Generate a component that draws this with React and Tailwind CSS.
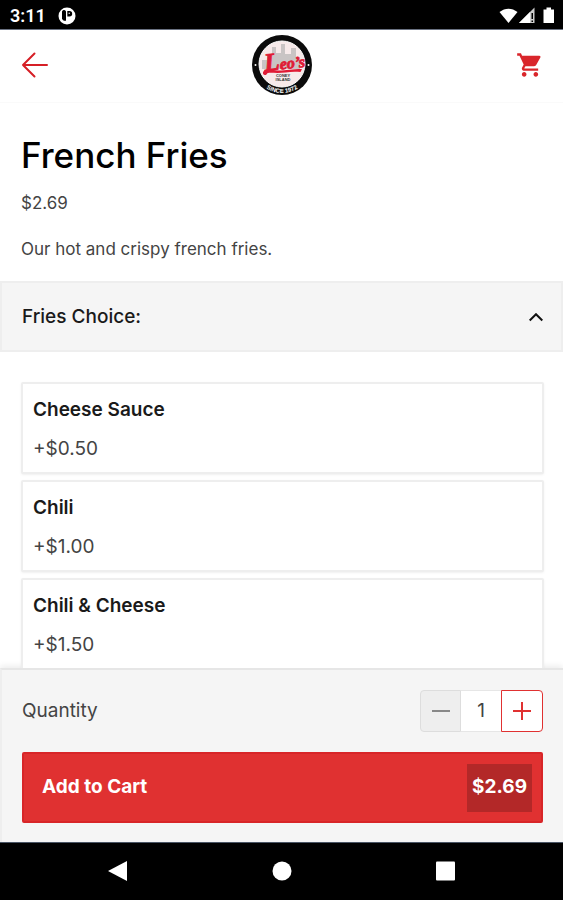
import { useState } from "react";
import { MdShoppingCart } from "react-icons/md";

const options = [
  { name: "Cheese Sauce", price: 0.5 },
  { name: "Chili", price: 1.0 },
  { name: "Chili & Cheese", price: 1.5 },
];

const BASE_PRICE = 2.69;

function StatusBar() {
  return (
    <div className="flex h-[30px] shrink-0 items-center justify-between border-b border-gray-500 bg-black pt-0.5 pr-2 pl-2.5 text-white">
      <div className="flex items-center gap-3">
        <span className="font-[Roboto,sans-serif] text-lg leading-none font-semibold">3:11</span>
        <svg className="size-[18px]" viewBox="0 0 18 18" aria-hidden="true">
          <circle cx="9" cy="9" r="8.5" fill="#fff" />
          <path d="M4 5.500a2 2 0 0 1 4-1v9.300H5.800L4 12z" fill="#000" />
          <path d="M9.300 4h2.200a2.700 2.700 0 0 1 0 5.400H9.300z" fill="#000" />
          <circle cx="11.200" cy="6.200" r="0.700" fill="#fff" />
        </svg>
      </div>
      <svg className="h-[18px] w-14" viewBox="0 0 56 18" fill="#fff" aria-hidden="true">
        <path d="M0.500 5C6 0.500 13 0.500 18.500 5L9.500 16z" />
        <path d="M20 16L35.500 0.500V16z" fill="#ccc" />
        <path d="M20 16L31 5V16z" />
        <path d="M32.500 6h1.500v6h-1.500zM32.500 13.500h1.500v1.500h-1.500z" fill="#000" />
        <path d="M44.500 2.500h3V0.500h4.500v2h3V16H44.500z" />
      </svg>
    </div>
  );
}

function Logo() {
  return (
    <svg className="size-[60px]" viewBox="0 0 60 60" role="img" aria-label="Leo's Coney Island, since 1972">
      <defs>
        <path id="logo-arc" d="M2 30a28 28 0 0 0 56 0" />
      </defs>
      <circle cx="30" cy="30" r="30" fill="#0b0b0b" />
      <circle cx="30" cy="29" r="23" fill="#f7eaea" stroke="#fff" />
      <path d="M10 34V25h5v-6h5v-7h4v6h5V9h4v10h6v-6h5v9h4v12z" fill="#c9c4c4" />
      <circle cx="3.500" cy="30" r="1" fill="#fff" />
      <circle cx="56.500" cy="30" r="1" fill="#fff" />
      <path d="M11 37c3-4 9-2 14-1.500c7 0.500 14-1.500 25-1.500l-1.500 3c-10-1-16 1-23 1c-6 0-10-1-11 1.500c-2 1.500-4 0-3.500-2.500z" fill="#e01b35" />
      <text
        x="13"
        y="36"
        transform="rotate(-6 13 36)"
        fill="#e01b35"
        stroke="#e01b35"
        strokeWidth="0.800"
        className="font-['Liberation_Serif',serif] text-[16px] font-bold italic"
      >
        <tspan className="text-[25px]">L</tspan>eo’s
      </text>
      <g fill="#333" textAnchor="middle" className="font-['Liberation_Sans',sans-serif] text-[4px] font-bold">
        <text x="31" y="42">CONEY</text>
        <text x="31" y="46">ISLAND</text>
      </g>
      <text fill="#fff" textAnchor="middle" className="font-['Liberation_Sans',sans-serif] text-[6px] font-bold">
        <textPath href="#logo-arc" startOffset="50%">SINCE 1972</textPath>
      </text>
    </svg>
  );
}

function Header() {
  return (
    <header className="grid h-[73px] shrink-0 grid-cols-3 items-center border-b border-[#fafafa] pr-[19px] pb-[3px] pl-[21px]">
      <button type="button" aria-label="Back" className="justify-self-start">
        <svg className="size-7" viewBox="0 0 28 28" fill="none" stroke="#d61f26" strokeWidth="2" strokeLinecap="round" strokeLinejoin="round">
          <path d="M26 14H2M13.500 2.500L2 14l11.500 11.500" />
        </svg>
      </button>
      <div className="justify-self-center">
        <Logo />
      </div>
      <button type="button" aria-label="Cart" className="justify-self-end">
        <MdShoppingCart className="size-7 text-[#d9262b]" />
      </button>
    </header>
  );
}

function Option({ option, selected, onSelect }) {
  return (
    <label
      className={`relative flex h-[92px] flex-col gap-3 rounded-xs border-2 bg-white px-2.5 pt-3 shadow-sm shadow-black/5 ${
        selected ? "border-[#e03131]" : "border-[#eee]"
      }`}
    >
      <input type="radio" name="fries" className="sr-only" checked={selected} onChange={onSelect} />
      <span className="text-[19px] leading-[27px] font-semibold">{option.name}</span>
      <span className="text-[19px] leading-[27px] text-[#444]">+${option.price.toFixed(2)}</span>
    </label>
  );
}

export default function App() {
  const [open, setOpen] = useState(true);
  const [selected, setSelected] = useState(null);
  const [quantity, setQuantity] = useState(1);

  const extra = selected === null ? 0 : options[selected].price;
  const total = (BASE_PRICE + extra) * quantity;

  return (
    <div className="flex h-screen flex-col bg-white font-[Inter,sans-serif] text-[#1a1a1a]">
      <StatusBar />
      <Header />

      <main className="min-h-0 flex-1 overflow-y-auto [scrollbar-width:none]">
        <div className="pt-7 pr-[19px] pl-[21px]">
          <h1 className="text-[35px] leading-[48px] font-medium text-black">French Fries</h1>
          <p className="mt-3 text-[17px] leading-6 text-[#444]">$2.69</p>
          <p className="mt-[22px] text-[17px] leading-6 text-[#444]">Our hot and crispy french fries.</p>
        </div>

        <button
          type="button"
          aria-expanded={open}
          onClick={() => setOpen(!open)}
          className="mt-5 flex h-[71px] w-full items-center justify-between border-2 border-[#eee] bg-[#f5f5f5] pt-0.5 pr-[18px] pl-5 text-[19px] font-medium"
        >
          Fries Choice:
          <svg className={open ? "h-2.5 w-3.5" : "h-2.5 w-3.5 rotate-180"} viewBox="0 0 14 10" fill="none" stroke="#111" strokeWidth="2">
            <path d="M0.700 7.500L7 1.200l6.300 6.300" />
          </svg>
        </button>

        {open && (
          <div className="flex flex-col gap-1.5 py-[30px] pr-[19px] pl-[21px]">
            {options.map((option, i) => (
              <Option key={option.name} option={option} selected={selected === i} onSelect={() => setSelected(i)} />
            ))}
          </div>
        )}
      </main>

      <footer className="shrink-0 border-t-2 border-l-2 border-[#e6e6e6] border-l-[#eee] bg-[#f5f5f5] pt-5 pr-5 pb-[19px] pl-5 shadow-[0_-2px_6px_rgba(0,0,0,0.08)]">
        <div className="flex items-center justify-between">
          <label htmlFor="quantity" className="text-[19px] text-[#444]">Quantity</label>
          <div className="flex h-[42px]">
            <button
              type="button"
              aria-label="Decrease quantity"
              onClick={() => setQuantity(Math.max(1, quantity - 1))}
              className="flex w-[41px] items-center justify-center rounded-l-sm border border-[#ddd] bg-[#eee]"
            >
              <svg className="size-[18px]" viewBox="0 0 18 18" stroke="#888" strokeWidth="2">
                <path d="M0 9h18" />
              </svg>
            </button>
            <input
              id="quantity"
              type="text"
              readOnly
              value={quantity}
              className="w-10 border-y border-[#e6e6e6] bg-white text-center text-[19px] text-[#444] outline-none"
            />
            <button
              type="button"
              aria-label="Increase quantity"
              onClick={() => setQuantity(quantity + 1)}
              className="flex w-[42px] items-center justify-center rounded-r-sm border border-[#e03131] bg-white"
            >
              <svg className="size-[18px]" viewBox="0 0 18 18" stroke="#e03131" strokeWidth="2">
                <path d="M0 9h18M9 0v18" />
              </svg>
            </button>
          </div>
        </div>
        <button
          type="button"
          className="mt-5 flex h-[71px] w-full items-center justify-between rounded-xs border-2 border-[#d82528] bg-[#e03131] pr-[9px] pl-[18px] text-[19px] font-bold text-white"
        >
          Add to Cart
          <span className="flex h-12 items-center bg-[#b32828] px-[5px]">${total.toFixed(2)}</span>
        </button>
      </footer>

      <nav className="flex h-[58px] shrink-0 items-center justify-center gap-36 border-t border-gray-600 bg-black pb-0.5">
        <button type="button" aria-label="Back">
          <svg className="size-5" viewBox="0 0 20 20" fill="#fff">
            <path d="M0 10L19 0v20z" />
          </svg>
        </button>
        <button type="button" aria-label="Home">
          <svg className="size-5" viewBox="0 0 20 20" fill="#fff">
            <circle cx="10" cy="10" r="9.500" />
          </svg>
        </button>
        <button type="button" aria-label="Recent apps">
          <svg className="size-5" viewBox="0 0 20 20" fill="#fff">
            <rect x="0" y="0.500" width="19" height="19" rx="1" />
          </svg>
        </button>
      </nav>
    </div>
  );
}
